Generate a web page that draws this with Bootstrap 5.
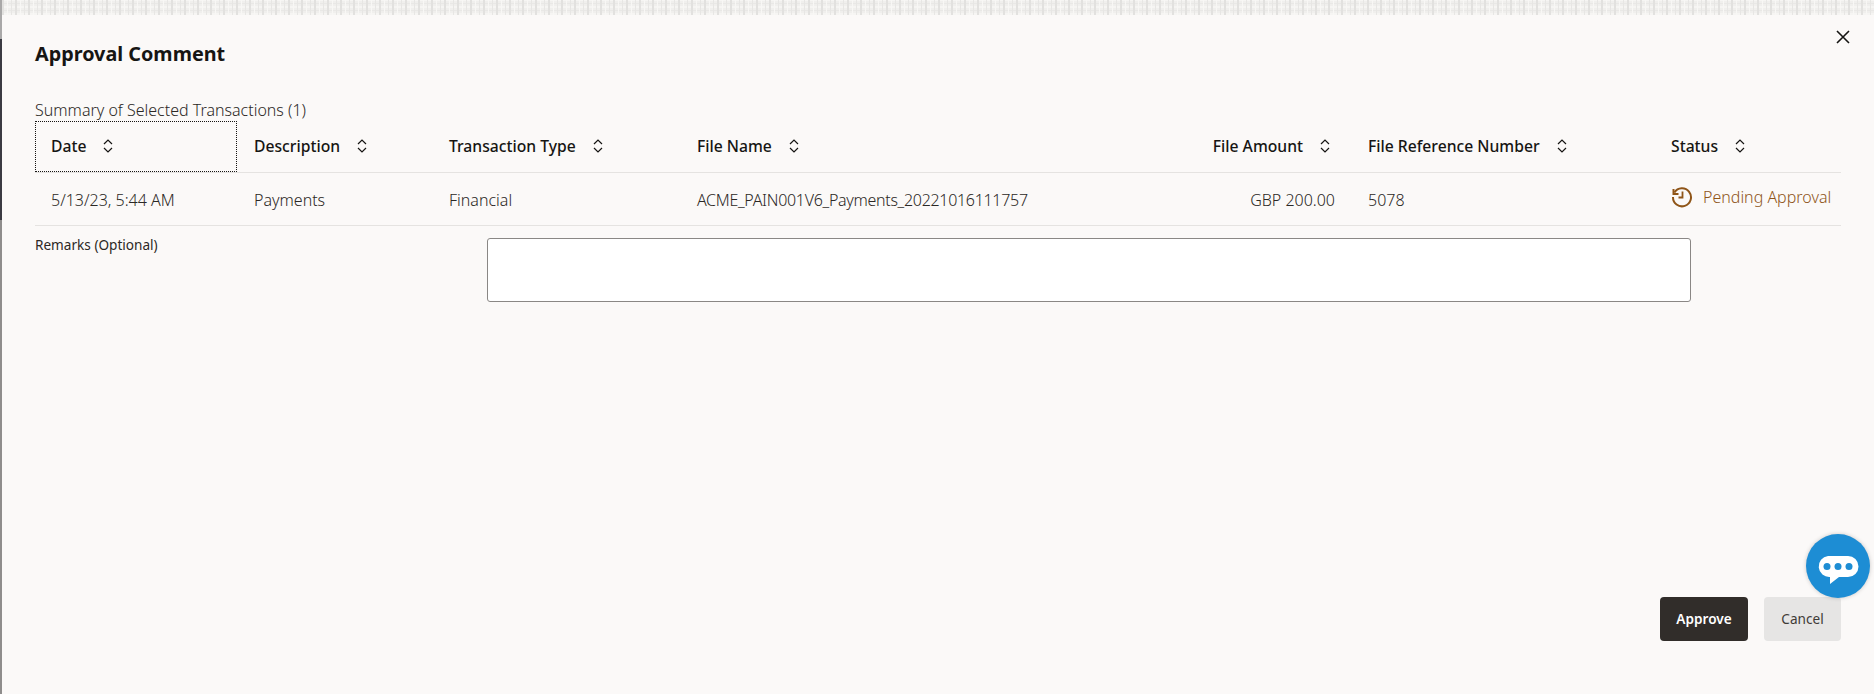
<!DOCTYPE html>
<html lang="en"><head><meta charset="utf-8"><title>Approval Comment</title>
<link href="https://cdn.jsdelivr.net/npm/bootstrap@5.3.0/dist/css/bootstrap.min.css" rel="stylesheet">
<style>
html,body{height:100%;overflow:hidden}
body{font-family:"Noto Sans","Liberation Sans",sans-serif;background:#fbf9f8;color:#2b2825;font-size:16px}
.shell{height:694px;width:1874px;position:relative}
.noise{height:15px;background-color:#f0efed;background-image:repeating-linear-gradient(90deg,#e2e1df 0 2px,transparent 2px 5px,#f8f7f5 5px 6px,transparent 6px 9px,#e7e6e4 9px 10px,transparent 10px 13px),repeating-linear-gradient(0deg,#f6f5f3 0 2px,transparent 2px 4px,#e9e8e6 4px 5px,transparent 5px 7px)}
.rail{width:2px;background:linear-gradient(#a9a8a8 0 39px,#3b3a42 39px 220px,#8f8d8c 220px)}
.dialog{background:#fbf9f8;height:679px;padding:0 33px 0 33px}
.dialog-title{font-size:19.8px;font-weight:700;color:#161513;line-height:28px;margin:25px 0 0}
.close-x{position:absolute;right:24px;top:30px;background:none;border:0;padding:0;line-height:0;color:#161513}
.summary{font-size:16px;font-weight:300;line-height:20px;margin-top:32px;height:21px}
.tx{table-layout:fixed;width:1806px;--bs-table-bg:transparent;margin:0;color:#2b2825}
.tx th,.tx td{padding:0 16px;vertical-align:middle;border-bottom:1px solid #e5e3e1;white-space:nowrap}
.tx th{height:51px;font-weight:500;font-size:15.7px;color:#161513;padding-top:2px}
.tx td{height:53px;font-size:16px;font-weight:300;padding-top:2px}
.tx .desc-col{padding-left:17px}
.tx td.fname{letter-spacing:-.3px}
.tx td.amt-cell{padding-right:17px}
.tx th.amt-head{padding-right:21px}
.tx th.focused{outline:1px dotted #161513;outline-offset:-1px}
.tx .sort{margin-left:16px;vertical-align:-2px}
.w1{width:202px}.w2{width:196px}.w3{width:248px}.w4{width:481px}.w5{width:190px}.w6{width:303px}.w7{width:186px}
.pend{color:#8f5518;display:flex;align-items:center;gap:10px;margin-top:-6px}
.pend svg{flex-shrink:0}
.rem-label{font-size:13.6px;font-weight:400;width:452px;line-height:18px;color:#2c2825;margin-top:-2px}
.rem-box{width:1204px;height:64px;border:1px solid #8a8785;border-radius:3px;resize:none;background:#fff}
.rem-row{margin-top:12px}
.foot{margin-top:295px}
.b-app,.b-can{height:44px;border:0;border-radius:4px;font-size:13.6px;padding:2px 0 0}
.b-app{background:#312d2a;color:#fff;font-weight:600;width:88px}
.b-can{background:#e6e5e4;color:#3f3b37;width:77px;font-weight:400}
.chat{position:absolute;left:1806px;top:534px;width:64px;height:64px;border-radius:50%;background:#1d8dd4;box-shadow:0 0 4px rgba(0,0,0,.2)}
.chat svg{margin-top:7px}
</style></head><body>
<div class="shell d-flex">
<div class="rail flex-shrink-0"></div>
<div class="flex-grow-1">
<div class="noise"></div>
<div class="dialog">
<h1 class="dialog-title">Approval Comment</h1>
<div class="summary">Summary of Selected Transactions (1)</div>
<table class="table tx">
<colgroup><col class="w1"><col class="w2"><col class="w3"><col class="w4"><col class="w5"><col class="w6"><col class="w7"></colgroup>
<thead><tr>
<th class="focused">Date<svg class="sort" width="12" height="16" viewBox="0 0 12 16"><path d="M2 6l4-4 4 4M2 10l4 4 4-4" fill="none" stroke="#161513" stroke-width="1.2"/></svg></th>
<th class="desc-col">Description<svg class="sort" width="12" height="16" viewBox="0 0 12 16"><path d="M2 6l4-4 4 4M2 10l4 4 4-4" fill="none" stroke="#161513" stroke-width="1.2"/></svg></th>
<th>Transaction Type<svg class="sort" width="12" height="16" viewBox="0 0 12 16"><path d="M2 6l4-4 4 4M2 10l4 4 4-4" fill="none" stroke="#161513" stroke-width="1.2"/></svg></th>
<th>File Name<svg class="sort" width="12" height="16" viewBox="0 0 12 16"><path d="M2 6l4-4 4 4M2 10l4 4 4-4" fill="none" stroke="#161513" stroke-width="1.2"/></svg></th>
<th class="text-end amt-head">File Amount<svg class="sort" width="12" height="16" viewBox="0 0 12 16"><path d="M2 6l4-4 4 4M2 10l4 4 4-4" fill="none" stroke="#161513" stroke-width="1.2"/></svg></th>
<th>File Reference Number<svg class="sort" width="12" height="16" viewBox="0 0 12 16"><path d="M2 6l4-4 4 4M2 10l4 4 4-4" fill="none" stroke="#161513" stroke-width="1.2"/></svg></th>
<th>Status<svg class="sort" width="12" height="16" viewBox="0 0 12 16"><path d="M2 6l4-4 4 4M2 10l4 4 4-4" fill="none" stroke="#161513" stroke-width="1.2"/></svg></th>
</tr></thead>
<tbody><tr>
<td>5/13/23, 5:44 AM</td><td class="desc-col">Payments</td><td>Financial</td><td class="fname">ACME_PAIN001V6_Payments_20221016111757</td><td class="text-end amt-cell">GBP 200.00</td><td>5078</td>
<td><div class="pend"><svg width="22" height="22" viewBox="0 0 22 22" fill="none" stroke="#8f5518" stroke-width="2"><path d="M3.400 6.500A9 9 0 1 1 2 11"/><path d="M2.500 3v5h5"/><path d="M11.500 5.500v6H7.500" stroke-width="1.800"/></svg>Pending Approval</div></td>
</tr></tbody></table>
<div class="d-flex rem-row"><label class="rem-label" for="rem">Remarks (Optional)</label><textarea id="rem" class="rem-box"></textarea></div>
<div class="foot d-flex justify-content-end gap-3"><button class="b-app" type="button">Approve</button><button class="b-can" type="button">Cancel</button></div>
</div></div>
<button class="close-x" type="button" aria-label="Close"><svg width="14" height="14" viewBox="0 0 14 14"><path d="M1 1l12 12M13 1L1 13" stroke="#161513" stroke-width="1.6" fill="none"/></svg></button>
<div class="chat d-flex align-items-center justify-content-center"><svg width="42" height="30" viewBox="0 0 42 30"><path d="M11 1h20a10.500 10.500 0 0 1 0 21H22l-9 7v-7.100A10.500 10.500 0 0 1 11 1z" fill="#fff"/><circle cx="10" cy="11.500" r="3.500" fill="#1d8dd4"/><circle cx="21" cy="11.500" r="3.500" fill="#1d8dd4"/><circle cx="32" cy="11.500" r="3.500" fill="#1d8dd4"/></svg></div>
</div>
<script src="https://cdn.jsdelivr.net/npm/bootstrap@5.3.0/dist/js/bootstrap.bundle.min.js"></script>
</body></html>
